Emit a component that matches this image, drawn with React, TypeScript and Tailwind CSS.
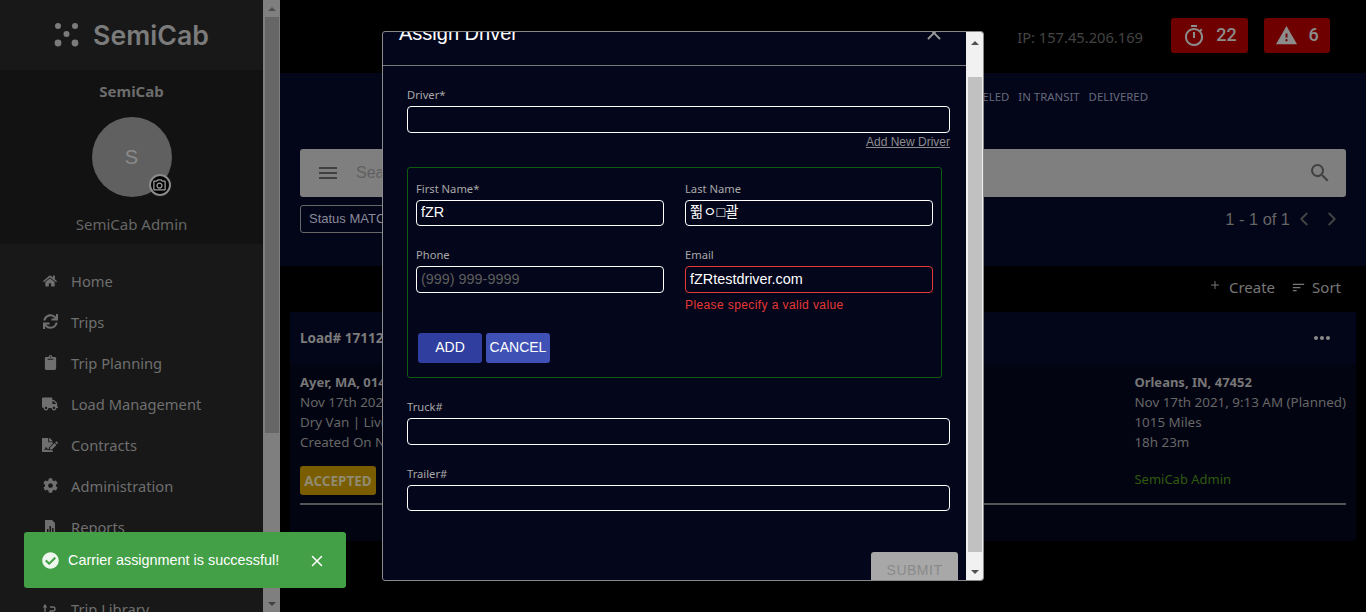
import { ChevronLeft, ChevronRight, Plus, X } from 'lucide-react'
import {
  FaCheckCircle,
  FaClipboard,
  FaCog,
  FaFileSignature,
  FaHome,
  FaSync,
  FaTruck,
} from 'react-icons/fa'
import {
  MdMenu,
  MdMoreHoriz,
  MdOutlinePhotoCamera,
  MdOutlineTimer,
  MdSearch,
  MdSort,
  MdWarning,
} from 'react-icons/md'

const ui = 'font-["Noto_Sans","Open_Sans",sans-serif]'
const arial = 'font-["Liberation_Sans","Noto_Sans_CJK_KR",sans-serif]'

function ReportIcon({ size }: { size: number }) {
  return (
    <svg width={size} height={size} viewBox="0 0 16 16" fill="currentColor">
      <path d="M3 1h7l3 3v11H3V1Zm2 9v3h1.500v-3H5Zm2.500-3v6H9V7H7.500Zm2.500 2v4h1.500V9H10Z" fillRule="evenodd" />
    </svg>
  )
}

const navItems = [
  { label: 'Home', Icon: FaHome, size: 14 },
  { label: 'Trips', Icon: FaSync, size: 15 },
  { label: 'Trip Planning', Icon: FaClipboard, size: 15 },
  { label: 'Load Management', Icon: FaTruck, size: 16 },
  { label: 'Contracts', Icon: FaFileSignature, size: 16 },
  { label: 'Administration', Icon: FaCog, size: 15 },
  { label: 'Reports', Icon: ReportIcon, size: 16 },
]

function Logo() {
  return (
    <div className="flex items-center gap-[14px]">
      <svg width="25" height="25" viewBox="0 0 25 25" fill="#7b7b7b">
        <circle cx="4" cy="4" r="3" />
        <circle cx="21" cy="4" r="3" />
        <circle cx="12.5" cy="12" r="3" />
        <circle cx="4" cy="21" r="3.4" />
        <circle cx="21" cy="21" r="3.4" />
      </svg>
      <span className="font-['Inter',sans-serif] text-[26.7px] font-semibold leading-none text-[#7b7b7b]">SemiCab</span>
    </div>
  )
}

function Sidebar() {
  return (
    <aside className={`${ui} flex h-full w-[280px] shrink-0 bg-[#181818]`}>
      <div className="min-w-0 flex-1 overflow-hidden">
        <div className="flex h-[70px] items-center justify-center">
          <Logo />
        </div>
        <div className="flex h-[174px] flex-col items-center bg-[#121212] pt-[11px]">
          <div className="text-[15px] font-bold leading-5 text-[#6c6c6c]">SemiCab</div>
          <div className={`${arial} relative mt-[16px] flex h-20 w-20 items-center justify-center rounded-full bg-[#606060] text-xl text-[#8a8a8a]`}>
            S
            <span className="absolute bottom-0 right-0 flex h-[22px] w-[22px] translate-x-[-1px] translate-y-[-1px] items-center justify-center rounded-full border-2 border-[#8a8a8a] bg-black">
              <MdOutlinePhotoCamera size={15} color="#a0a0a0" />
            </span>
          </div>
          <div className="mt-[17px] text-[15px] leading-5 text-[#666]">SemiCab Admin</div>
        </div>
        <nav className="pt-[16px]">
          {navItems.map(({ label, Icon, size }) => (
            <div key={label} className="flex h-[41px] items-center pl-[42px] text-[#6f6f6f]">
              <span className="flex w-4 justify-center">
                <Icon size={size} />
              </span>
              <span className="ml-[13px] text-[14.7px] leading-5">{label}</span>
            </div>
          ))}
          <div className="mt-[41px] flex h-[41px] items-center pl-[42px] text-[#6f6f6f]">
            <span className="flex w-4 justify-center">
              <svg width="16" height="16" viewBox="0 0 16 16" fill="none" stroke="currentColor" strokeWidth="1.4">
                <path d="M3 14V5M1.500 6.500 3 4l1.500 2.500M8 14v-4M8 6h3a2 2 0 0 1 0 4H8" />
              </svg>
            </span>
            <span className="ml-[13px] text-[14.7px] leading-5">Trip Library</span>
          </div>
        </nav>
      </div>
      <div className="flex h-full w-[17px] shrink-0 flex-col items-center bg-[#7f7f7f]">
        <div className="flex h-[17px] w-full items-center justify-center">
          <div className="h-0 w-0 border-x-[4px] border-b-[4px] border-x-transparent border-b-[#505050]" />
        </div>
        <div className="h-[416px] w-[14px] bg-[#666]" />
        <div className="flex-1" />
        <div className="flex h-[17px] w-full items-center justify-center">
          <div className="h-0 w-0 border-x-[4px] border-t-[4px] border-x-transparent border-t-[#404040]" />
        </div>
      </div>
    </aside>
  )
}

function Header() {
  return (
    <header className={`${ui} flex h-[73px] shrink-0 items-start justify-end pr-[36px] pt-[18px]`}>
      <span className="mr-[28px] mt-[9px] text-[14.7px] leading-5 text-[#444]">IP: 157.45.206.169</span>
      <div className="mr-[16px] flex h-[35px] w-[77px] items-center justify-center gap-[10px] rounded-[3px] bg-[#6f0000] font-['Roboto',sans-serif] text-lg font-medium text-[#8c8c8c]">
        <MdOutlineTimer size={24} />
        <span className="-translate-y-[1px]">22</span>
      </div>
      <div className="flex h-[35px] w-[66px] items-center justify-center gap-[10px] rounded-[3px] bg-[#6f0000] font-['Roboto',sans-serif] text-lg font-medium text-[#8c8c8c]">
        <MdWarning size={23} />
        <span className="-translate-y-[1px]">6</span>
      </div>
    </header>
  )
}

function TopPanel() {
  return (
    <section className="flex h-[193px] shrink-0 flex-col bg-[#030519] pl-[20px] pr-[20px]">
      <div className={`${ui} flex justify-end gap-[9px] pr-[198px] pt-[15px] text-[11.4px] leading-[18px] text-[#666a7c]`}>
        <span>CANCELED</span>
        <span>IN TRANSIT</span>
        <span>DELIVERED</span>
      </div>
      <div className="mt-[43px] flex h-[48px] items-center rounded-[3px] bg-[#7f7f7f] pl-[16px] pr-[14px]">
        <MdMenu size={24} color="#404040" />
        <span className={`${arial} ml-[16px] flex-1 text-base text-[#5f5f5f]`}>Search</span>
        <MdSearch size={24} color="#404040" />
      </div>
      <div className="mt-[8px] flex items-center justify-between">
        <div className={`${arial} flex h-[28px] items-center rounded-[3px] border border-[#666] pl-2 text-[13px] text-[#8a8a9a]`}>
          Status MATCHED
        </div>
        <div className={`${arial} flex items-center pr-[3px] text-[16.4px] text-[#666]`}>
          1 - 1 of 1
          <ChevronLeft size={22} color="#444" className="ml-[3px]" />
          <ChevronRight size={22} color="#444" className="ml-[6px]" />
        </div>
      </div>
    </section>
  )
}

function LoadCard() {
  return (
    <section className={`${ui} mx-[10px] flex h-[229px] flex-col rounded-[3px] bg-[#020412]`}>
      <div className="flex h-[52px] items-center justify-between bg-[#030518] pl-[10px] pr-[22px]">
        <span className="text-[13.5px] font-bold text-[#7b7b7b]">Load# 171120001</span>
        <MdMoreHoriz size={24} color="#8a8a8a" />
      </div>
      <div className="flex flex-1 flex-col px-[10px] pt-[8px]">
        <div className="flex justify-between text-[13.4px] leading-[20px] text-[#666]">
          <div>
            <div className="text-[13px] font-bold text-[#777]">Ayer, MA, 01432</div>
            <div>Nov 17th 2021, 8:00 AM</div>
            <div>Dry Van | Live</div>
            <div>Created On Nov 17th</div>
            <div className="mt-[14px] flex h-[29px] w-[76px] items-center justify-center rounded-[3px] bg-[#7a5d00] text-[13.5px] font-bold text-[#8f8a70]">
              ACCEPTED
            </div>
          </div>
          <div>
            <div className="text-[13px] font-bold text-[#777]">Orleans, IN, 47452</div>
            <div>Nov 17th 2021, 9:13 AM (Planned)</div>
            <div>1015 Miles</div>
            <div>18h 23m</div>
            <div className="mt-[17px] text-[13px] text-[#2f5a0e]">SemiCab Admin</div>
          </div>
        </div>
        <div className="mt-[8px] border-t-2 border-[#555]" />
      </div>
    </section>
  )
}

function Field({
  label,
  value,
  placeholder,
  error,
  tall,
}: {
  label: string
  value?: string
  placeholder?: string
  error?: boolean
  tall?: boolean
}) {
  return (
    <label className="block">
      <span className={`${ui} block text-[11.2px] leading-[18px] text-[#a8a8a8]`}>{label}</span>
      <div
        className={`${arial} mt-[2px] flex items-center rounded-[4px] border px-[4px] text-[14.4px] text-white ${
          tall ? 'h-[27px]' : 'h-[26px]'
        } ${error ? 'border-[#e53935]' : 'border-white'}`}
      >
        {value ?? <span className="text-[#5d5d5d]">{placeholder}</span>}
      </div>
    </label>
  )
}

function AssignDriverModal() {
  return (
    <div className="absolute left-[382px] top-[31px] flex h-[550px] w-[602px] overflow-hidden rounded-[3px] border border-[#8a8a8a] bg-[#04061b]">
      <div className="min-w-0 flex-1 overflow-hidden">
        <div className="flex h-[34px] items-end justify-between border-b border-[#777] pl-[16px] pr-[21px]">
          <span className={`${arial} relative top-[-20px] text-xl leading-6 text-white`}>Assign Driver</span>
          <X size={22} color="#999" className="relative top-[-21px]" />
        </div>
        <div className="pl-[24px] pr-[16px] pt-[20px]">
          <Field label="Driver*" value="" tall />
          <div className={`${arial} mt-[2px] text-right text-xs leading-[15px] text-[#8c8c8c] underline`}>Add New Driver</div>
          <div className="mr-[8px] mt-[17px] h-[211px] rounded-[3px] border border-[#0f5c0f] px-[8px] pt-[12px]">
            <div className="grid grid-cols-2 gap-x-[21px] gap-y-[20px]">
              <Field label="First Name*" value="fZR" />
              <Field label="Last Name" value="쮦ㅇ□괄" />
              <Field label="Phone" placeholder="(999) 999-9999" tall />
              <div>
                <Field label="Email" value="fZRtestdriver.com" error tall />
                <div className={`${arial} mt-[5px] text-xs leading-[15px] tracking-[0.4px] text-[#e53935]`}>
                  Please specify a valid value
                </div>
              </div>
            </div>
            <div className={`${arial} flex gap-[4px] pl-[2px] pt-[20px] text-sm text-white`}>
              <button className="h-[30px] w-[64px] rounded-[3px] bg-[#303f9f] pb-[2px]">ADD</button>
              <button className="h-[30px] w-[64px] rounded-[3px] bg-[#3f51b5] pb-[2px]">CANCEL</button>
            </div>
          </div>
          <div className="mt-[20px]">
            <Field label="Truck#" value="" tall />
          </div>
          <div className="mt-[20px]">
            <Field label="Trailer#" value="" />
          </div>
          <div className="mt-[41px] flex justify-end">
            <div className={`${arial} relative left-[8px] flex h-[40px] w-[87px] justify-center rounded-[3px] bg-[#a8a8a8] pt-[8px] text-sm tracking-[0.5px] text-[#8a8a8a]`}>
              SUBMIT
            </div>
          </div>
        </div>
      </div>
      <div className="flex h-full w-[17px] shrink-0 flex-col items-center bg-[#f1f1f1]">
        <div className="flex h-[45px] w-full items-start justify-center pt-[9px]">
          <div className="h-0 w-0 border-x-[4px] border-b-[4px] border-x-transparent border-b-[#505050]" />
        </div>
        <div className="h-[475px] w-[14px] bg-[#c1c1c1]" />
        <div className="flex-1" />
        <div className="flex h-[16px] w-full items-center justify-center">
          <div className="h-0 w-0 border-x-[4px] border-t-[4px] border-x-transparent border-t-[#505050]" />
        </div>
      </div>
    </div>
  )
}

function Toast() {
  return (
    <div className={`${arial} absolute left-[24px] top-[532px] flex h-[56px] w-[322px] items-center rounded-[3px] bg-[#43a047] pl-[18px] pt-[1px] text-[14.4px] text-white`}>
      <FaCheckCircle size={17} color="#eef7ee" />
      <span className="ml-[9px]">Carrier assignment is successful!</span>
      <X size={18} color="white" className="ml-[29px]" />
    </div>
  )
}

export default function App() {
  return (
    <div className="relative flex h-[612px] w-[1366px] overflow-hidden bg-black">
      <Sidebar />
      <main className="flex min-w-0 flex-1 flex-col">
        <Header />
        <TopPanel />
        <div className={`${ui} flex h-[46px] shrink-0 items-center justify-end gap-[16px] pb-[3px] pr-[25px] text-[15px] text-[#777]`}>
          <span className="flex items-center gap-[8px]">
            <Plus size={12} className="-translate-y-[3px]" />
            Create
          </span>
          <span className="flex items-center gap-[6px]">
            <MdSort size={15} />
            Sort
          </span>
        </div>
        <LoadCard />
      </main>
      <AssignDriverModal />
      <Toast />
    </div>
  )
}
